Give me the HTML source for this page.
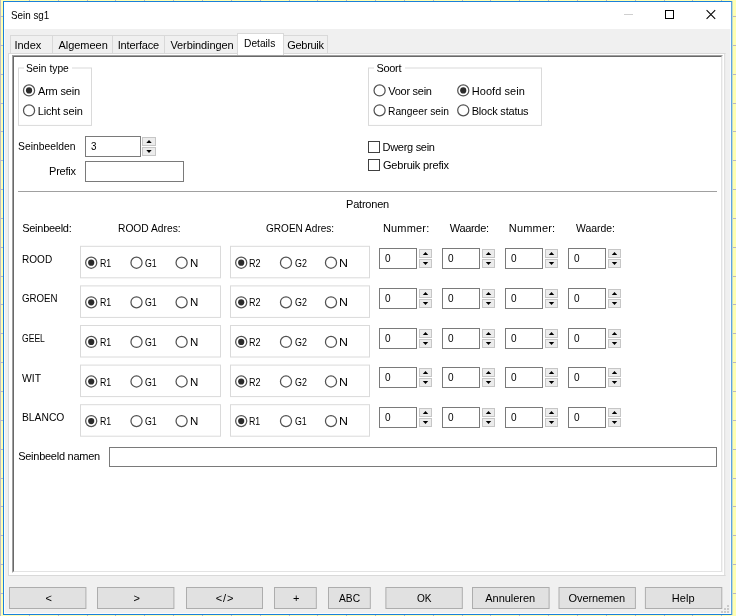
<!DOCTYPE html>
<html><head><meta charset="utf-8"><title>Sein sg1</title>
<style>
*{margin:0;padding:0;box-sizing:border-box}
html,body{width:736px;height:616px;overflow:hidden}
body{background-color:#ffffb2;font-family:"Liberation Sans",sans-serif;font-size:11px;color:#000;position:relative;
background-image:linear-gradient(#bcbcc8,#bcbcc8),repeating-linear-gradient(to bottom,#b8b8c6 0,#b8b8c6 1px,transparent 1px,transparent 28.85px),repeating-linear-gradient(to right,#b8b8c6 0,#b8b8c6 1px,transparent 1px,transparent 28.85px);
background-size:1px 100%,100% 100%,100% 100%;background-position:0 0,0 16px,0 0;background-repeat:no-repeat,no-repeat,no-repeat}
.abs{position:absolute}
.t{position:absolute;white-space:pre;line-height:13px;height:13px}
#win{position:absolute;left:3px;top:1px;width:729px;height:614px;border:1px solid #1a80d9;border-right-color:#5fa4e3;background:#f0f0f0}
#edge{position:absolute;left:732px;top:1px;width:1px;height:614px;background:#c4dcc8}
#inner{position:absolute;left:0;top:0;width:727px;height:612px;border:1px solid #fbfbfb;border-top:none}
#title{position:absolute;left:0;top:0;width:727px;height:27px;background:#fff}
.tab{position:absolute;border:1px solid #d9d9d9;border-bottom:none;background:#f0f0f0}
.tab.sel{background:#fff}
.grp{position:absolute;border:1px solid #dcdcdc}
.chk{position:absolute;border:1px solid #404040;background:#fff}
.inp{position:absolute;border:1px solid #7a7a7a;background:#fff}
.sb{position:absolute;border:1px solid #c6c6c6;background:#ececec}
.btn{position:absolute;border:1px solid #adadad;background:#e1e1e1}
svg{position:absolute;overflow:visible}
#txt{position:absolute;left:0;top:0;width:727px;height:612px;filter:grayscale(1)}
</style></head>
<body>
<div id="edge"></div>
<div id="win">
<div id="inner"></div>
<div id="title"></div>
<svg style="left:0;top:0" width="1" height="1"><path d="M620 12.5h9" stroke="#cfcfcf" stroke-width="1" fill="none"/><rect x="661.5" y="8.5" width="8" height="8" stroke="#000" stroke-width="1" fill="none"/><path d="M702.6 8.2l8.6 8.6M711.2 8.2l-8.6 8.6" stroke="#000" stroke-width="1.05" fill="none"/></svg>
<div class="abs" style="left:4px;top:51px;width:718px;height:523px;border:1px solid #d9d9d9;border-right-color:#ececec;background:#fff"></div>
<div class="abs" style="left:720px;top:52px;width:1px;height:521px;background:#e0e0e0"></div>
<div class="abs" style="left:8px;top:53px;width:711px;height:518px;border-top:1px solid #a0a0a0;border-left:1px solid #a0a0a0;border-right:1px solid #f3f3f3;border-bottom:1px solid #fff;background:#fff"></div>
<div class="abs" style="left:9px;top:54px;width:709px;height:516px;border-top:1px solid #696969;border-left:1px solid #696969;border-right:1px solid #e3e3e3;border-bottom:1px solid #e3e3e3;background:#fff"></div>
<div class="tab" style="left:6px;top:33px;width:43px;height:18px;"></div>
<div class="tab" style="left:48px;top:33px;width:61px;height:18px;"></div>
<div class="tab" style="left:108px;top:33px;width:53px;height:18px;"></div>
<div class="tab" style="left:160px;top:33px;width:75px;height:18px;"></div>
<div class="tab" style="left:279px;top:33px;width:45px;height:18px;"></div>
<div class="tab sel" style="left:233px;top:31px;width:47px;height:22px;"></div>
<svg style="left:0;top:0" width="1" height="1"><rect x="14.5" y="66.00" width="73" height="57.40" fill="none" stroke="#dadada" stroke-width="1"/></svg>
<div class="abs" style="left:20px;top:65px;width:48px;height:2px;background:#fff"></div>
<svg style="left:0;top:0" width="1" height="1"><circle cx="25.05" cy="88.40" r="5.55" fill="#fff" stroke="#525252" stroke-width="1.25"/><circle cx="25.05" cy="88.40" r="3.1" fill="#2b2b2b"/></svg>
<svg style="left:0;top:0" width="1" height="1"><circle cx="25.05" cy="108.40" r="5.55" fill="#fff" stroke="#525252" stroke-width="1.25"/></svg>
<svg style="left:0;top:0" width="1" height="1"><rect x="364.5" y="66.00" width="173" height="57.40" fill="none" stroke="#dadada" stroke-width="1"/></svg>
<div class="abs" style="left:370px;top:65px;width:31px;height:2px;background:#fff"></div>
<svg style="left:0;top:0" width="1" height="1"><circle cx="375.60" cy="88.40" r="5.55" fill="#fff" stroke="#525252" stroke-width="1.25"/></svg>
<svg style="left:0;top:0" width="1" height="1"><circle cx="459.25" cy="88.40" r="5.55" fill="#fff" stroke="#525252" stroke-width="1.25"/><circle cx="459.25" cy="88.40" r="3.1" fill="#2b2b2b"/></svg>
<svg style="left:0;top:0" width="1" height="1"><circle cx="375.60" cy="108.30" r="5.55" fill="#fff" stroke="#525252" stroke-width="1.25"/></svg>
<svg style="left:0;top:0" width="1" height="1"><circle cx="459.25" cy="108.30" r="5.55" fill="#fff" stroke="#525252" stroke-width="1.25"/></svg>
<div class="inp" style="left:81px;top:134px;width:56px;height:21px;"></div>
<div class="sb" style="left:138px;top:135px;width:14px;height:9px;"></div>
<div class="sb" style="left:138px;top:145px;width:14px;height:9px;"></div>
<svg style="left:0;top:0" width="1" height="1"><path d="M142.30 141.00L145.00 138.00L147.70 141.00Z" fill="#000"/><path d="M142.30 148.10L145.00 151.10L147.70 148.10Z" fill="#000"/></svg>
<div class="inp" style="left:81px;top:159px;width:99px;height:21px;"></div>
<div class="chk" style="left:364px;top:139px;width:12px;height:12px;"></div>
<div class="chk" style="left:364px;top:157px;width:12px;height:12px;"></div>
<div class="abs" style="left:14px;top:189px;width:699px;height:1px;background:#a0a0a0"></div>
<svg style="left:0;top:0" width="1" height="1"><rect x="76.5" y="244.30" width="140" height="31.50" fill="none" stroke="#dadada" stroke-width="1"/></svg>
<svg style="left:0;top:0" width="1" height="1"><rect x="226.5" y="244.30" width="139" height="31.50" fill="none" stroke="#dadada" stroke-width="1"/></svg>
<svg style="left:0;top:0" width="1" height="1"><circle cx="87.20" cy="260.70" r="5.55" fill="#fff" stroke="#525252" stroke-width="1.25"/><circle cx="87.20" cy="260.70" r="3.1" fill="#2b2b2b"/></svg>
<svg style="left:0;top:0" width="1" height="1"><circle cx="132.50" cy="260.70" r="5.55" fill="#fff" stroke="#525252" stroke-width="1.25"/></svg>
<svg style="left:0;top:0" width="1" height="1"><circle cx="177.60" cy="260.70" r="5.55" fill="#fff" stroke="#525252" stroke-width="1.25"/></svg>
<svg style="left:0;top:0" width="1" height="1"><circle cx="237.20" cy="260.70" r="5.55" fill="#fff" stroke="#525252" stroke-width="1.25"/><circle cx="237.20" cy="260.70" r="3.1" fill="#2b2b2b"/></svg>
<svg style="left:0;top:0" width="1" height="1"><circle cx="282.00" cy="260.70" r="5.55" fill="#fff" stroke="#525252" stroke-width="1.25"/></svg>
<svg style="left:0;top:0" width="1" height="1"><circle cx="327.00" cy="260.70" r="5.55" fill="#fff" stroke="#525252" stroke-width="1.25"/></svg>
<div class="inp" style="left:375px;top:246px;width:38px;height:21px;"></div>
<div class="sb" style="left:415px;top:247px;width:13px;height:9px;"></div>
<div class="sb" style="left:415px;top:257px;width:13px;height:9px;"></div>
<svg style="left:0;top:0" width="1" height="1"><path d="M418.80 253.00L421.50 250.00L424.20 253.00Z" fill="#000"/><path d="M418.80 260.10L421.50 263.10L424.20 260.10Z" fill="#000"/></svg>
<div class="inp" style="left:438px;top:246px;width:38px;height:21px;"></div>
<div class="sb" style="left:478px;top:247px;width:13px;height:9px;"></div>
<div class="sb" style="left:478px;top:257px;width:13px;height:9px;"></div>
<svg style="left:0;top:0" width="1" height="1"><path d="M481.80 253.00L484.50 250.00L487.20 253.00Z" fill="#000"/><path d="M481.80 260.10L484.50 263.10L487.20 260.10Z" fill="#000"/></svg>
<div class="inp" style="left:501px;top:246px;width:38px;height:21px;"></div>
<div class="sb" style="left:541px;top:247px;width:13px;height:9px;"></div>
<div class="sb" style="left:541px;top:257px;width:13px;height:9px;"></div>
<svg style="left:0;top:0" width="1" height="1"><path d="M544.80 253.00L547.50 250.00L550.20 253.00Z" fill="#000"/><path d="M544.80 260.10L547.50 263.10L550.20 260.10Z" fill="#000"/></svg>
<div class="inp" style="left:564px;top:246px;width:38px;height:21px;"></div>
<div class="sb" style="left:604px;top:247px;width:13px;height:9px;"></div>
<div class="sb" style="left:604px;top:257px;width:13px;height:9px;"></div>
<svg style="left:0;top:0" width="1" height="1"><path d="M607.80 253.00L610.50 250.00L613.20 253.00Z" fill="#000"/><path d="M607.80 260.10L610.50 263.10L613.20 260.10Z" fill="#000"/></svg>
<svg style="left:0;top:0" width="1" height="1"><rect x="76.5" y="283.90" width="140" height="31.50" fill="none" stroke="#dadada" stroke-width="1"/></svg>
<svg style="left:0;top:0" width="1" height="1"><rect x="226.5" y="283.90" width="139" height="31.50" fill="none" stroke="#dadada" stroke-width="1"/></svg>
<svg style="left:0;top:0" width="1" height="1"><circle cx="87.20" cy="300.30" r="5.55" fill="#fff" stroke="#525252" stroke-width="1.25"/><circle cx="87.20" cy="300.30" r="3.1" fill="#2b2b2b"/></svg>
<svg style="left:0;top:0" width="1" height="1"><circle cx="132.50" cy="300.30" r="5.55" fill="#fff" stroke="#525252" stroke-width="1.25"/></svg>
<svg style="left:0;top:0" width="1" height="1"><circle cx="177.60" cy="300.30" r="5.55" fill="#fff" stroke="#525252" stroke-width="1.25"/></svg>
<svg style="left:0;top:0" width="1" height="1"><circle cx="237.20" cy="300.30" r="5.55" fill="#fff" stroke="#525252" stroke-width="1.25"/><circle cx="237.20" cy="300.30" r="3.1" fill="#2b2b2b"/></svg>
<svg style="left:0;top:0" width="1" height="1"><circle cx="282.00" cy="300.30" r="5.55" fill="#fff" stroke="#525252" stroke-width="1.25"/></svg>
<svg style="left:0;top:0" width="1" height="1"><circle cx="327.00" cy="300.30" r="5.55" fill="#fff" stroke="#525252" stroke-width="1.25"/></svg>
<div class="inp" style="left:375px;top:286px;width:38px;height:21px;"></div>
<div class="sb" style="left:415px;top:287px;width:13px;height:9px;"></div>
<div class="sb" style="left:415px;top:297px;width:13px;height:9px;"></div>
<svg style="left:0;top:0" width="1" height="1"><path d="M418.80 293.00L421.50 290.00L424.20 293.00Z" fill="#000"/><path d="M418.80 300.10L421.50 303.10L424.20 300.10Z" fill="#000"/></svg>
<div class="inp" style="left:438px;top:286px;width:38px;height:21px;"></div>
<div class="sb" style="left:478px;top:287px;width:13px;height:9px;"></div>
<div class="sb" style="left:478px;top:297px;width:13px;height:9px;"></div>
<svg style="left:0;top:0" width="1" height="1"><path d="M481.80 293.00L484.50 290.00L487.20 293.00Z" fill="#000"/><path d="M481.80 300.10L484.50 303.10L487.20 300.10Z" fill="#000"/></svg>
<div class="inp" style="left:501px;top:286px;width:38px;height:21px;"></div>
<div class="sb" style="left:541px;top:287px;width:13px;height:9px;"></div>
<div class="sb" style="left:541px;top:297px;width:13px;height:9px;"></div>
<svg style="left:0;top:0" width="1" height="1"><path d="M544.80 293.00L547.50 290.00L550.20 293.00Z" fill="#000"/><path d="M544.80 300.10L547.50 303.10L550.20 300.10Z" fill="#000"/></svg>
<div class="inp" style="left:564px;top:286px;width:38px;height:21px;"></div>
<div class="sb" style="left:604px;top:287px;width:13px;height:9px;"></div>
<div class="sb" style="left:604px;top:297px;width:13px;height:9px;"></div>
<svg style="left:0;top:0" width="1" height="1"><path d="M607.80 293.00L610.50 290.00L613.20 293.00Z" fill="#000"/><path d="M607.80 300.10L610.50 303.10L613.20 300.10Z" fill="#000"/></svg>
<svg style="left:0;top:0" width="1" height="1"><rect x="76.5" y="323.50" width="140" height="31.50" fill="none" stroke="#dadada" stroke-width="1"/></svg>
<svg style="left:0;top:0" width="1" height="1"><rect x="226.5" y="323.50" width="139" height="31.50" fill="none" stroke="#dadada" stroke-width="1"/></svg>
<svg style="left:0;top:0" width="1" height="1"><circle cx="87.20" cy="339.90" r="5.55" fill="#fff" stroke="#525252" stroke-width="1.25"/><circle cx="87.20" cy="339.90" r="3.1" fill="#2b2b2b"/></svg>
<svg style="left:0;top:0" width="1" height="1"><circle cx="132.50" cy="339.90" r="5.55" fill="#fff" stroke="#525252" stroke-width="1.25"/></svg>
<svg style="left:0;top:0" width="1" height="1"><circle cx="177.60" cy="339.90" r="5.55" fill="#fff" stroke="#525252" stroke-width="1.25"/></svg>
<svg style="left:0;top:0" width="1" height="1"><circle cx="237.20" cy="339.90" r="5.55" fill="#fff" stroke="#525252" stroke-width="1.25"/><circle cx="237.20" cy="339.90" r="3.1" fill="#2b2b2b"/></svg>
<svg style="left:0;top:0" width="1" height="1"><circle cx="282.00" cy="339.90" r="5.55" fill="#fff" stroke="#525252" stroke-width="1.25"/></svg>
<svg style="left:0;top:0" width="1" height="1"><circle cx="327.00" cy="339.90" r="5.55" fill="#fff" stroke="#525252" stroke-width="1.25"/></svg>
<div class="inp" style="left:375px;top:326px;width:38px;height:21px;"></div>
<div class="sb" style="left:415px;top:327px;width:13px;height:9px;"></div>
<div class="sb" style="left:415px;top:337px;width:13px;height:9px;"></div>
<svg style="left:0;top:0" width="1" height="1"><path d="M418.80 333.00L421.50 330.00L424.20 333.00Z" fill="#000"/><path d="M418.80 340.10L421.50 343.10L424.20 340.10Z" fill="#000"/></svg>
<div class="inp" style="left:438px;top:326px;width:38px;height:21px;"></div>
<div class="sb" style="left:478px;top:327px;width:13px;height:9px;"></div>
<div class="sb" style="left:478px;top:337px;width:13px;height:9px;"></div>
<svg style="left:0;top:0" width="1" height="1"><path d="M481.80 333.00L484.50 330.00L487.20 333.00Z" fill="#000"/><path d="M481.80 340.10L484.50 343.10L487.20 340.10Z" fill="#000"/></svg>
<div class="inp" style="left:501px;top:326px;width:38px;height:21px;"></div>
<div class="sb" style="left:541px;top:327px;width:13px;height:9px;"></div>
<div class="sb" style="left:541px;top:337px;width:13px;height:9px;"></div>
<svg style="left:0;top:0" width="1" height="1"><path d="M544.80 333.00L547.50 330.00L550.20 333.00Z" fill="#000"/><path d="M544.80 340.10L547.50 343.10L550.20 340.10Z" fill="#000"/></svg>
<div class="inp" style="left:564px;top:326px;width:38px;height:21px;"></div>
<div class="sb" style="left:604px;top:327px;width:13px;height:9px;"></div>
<div class="sb" style="left:604px;top:337px;width:13px;height:9px;"></div>
<svg style="left:0;top:0" width="1" height="1"><path d="M607.80 333.00L610.50 330.00L613.20 333.00Z" fill="#000"/><path d="M607.80 340.10L610.50 343.10L613.20 340.10Z" fill="#000"/></svg>
<svg style="left:0;top:0" width="1" height="1"><rect x="76.5" y="363.10" width="140" height="31.50" fill="none" stroke="#dadada" stroke-width="1"/></svg>
<svg style="left:0;top:0" width="1" height="1"><rect x="226.5" y="363.10" width="139" height="31.50" fill="none" stroke="#dadada" stroke-width="1"/></svg>
<svg style="left:0;top:0" width="1" height="1"><circle cx="87.20" cy="379.50" r="5.55" fill="#fff" stroke="#525252" stroke-width="1.25"/><circle cx="87.20" cy="379.50" r="3.1" fill="#2b2b2b"/></svg>
<svg style="left:0;top:0" width="1" height="1"><circle cx="132.50" cy="379.50" r="5.55" fill="#fff" stroke="#525252" stroke-width="1.25"/></svg>
<svg style="left:0;top:0" width="1" height="1"><circle cx="177.60" cy="379.50" r="5.55" fill="#fff" stroke="#525252" stroke-width="1.25"/></svg>
<svg style="left:0;top:0" width="1" height="1"><circle cx="237.20" cy="379.50" r="5.55" fill="#fff" stroke="#525252" stroke-width="1.25"/><circle cx="237.20" cy="379.50" r="3.1" fill="#2b2b2b"/></svg>
<svg style="left:0;top:0" width="1" height="1"><circle cx="282.00" cy="379.50" r="5.55" fill="#fff" stroke="#525252" stroke-width="1.25"/></svg>
<svg style="left:0;top:0" width="1" height="1"><circle cx="327.00" cy="379.50" r="5.55" fill="#fff" stroke="#525252" stroke-width="1.25"/></svg>
<div class="inp" style="left:375px;top:365px;width:38px;height:21px;"></div>
<div class="sb" style="left:415px;top:366px;width:13px;height:9px;"></div>
<div class="sb" style="left:415px;top:376px;width:13px;height:9px;"></div>
<svg style="left:0;top:0" width="1" height="1"><path d="M418.80 372.00L421.50 369.00L424.20 372.00Z" fill="#000"/><path d="M418.80 379.10L421.50 382.10L424.20 379.10Z" fill="#000"/></svg>
<div class="inp" style="left:438px;top:365px;width:38px;height:21px;"></div>
<div class="sb" style="left:478px;top:366px;width:13px;height:9px;"></div>
<div class="sb" style="left:478px;top:376px;width:13px;height:9px;"></div>
<svg style="left:0;top:0" width="1" height="1"><path d="M481.80 372.00L484.50 369.00L487.20 372.00Z" fill="#000"/><path d="M481.80 379.10L484.50 382.10L487.20 379.10Z" fill="#000"/></svg>
<div class="inp" style="left:501px;top:365px;width:38px;height:21px;"></div>
<div class="sb" style="left:541px;top:366px;width:13px;height:9px;"></div>
<div class="sb" style="left:541px;top:376px;width:13px;height:9px;"></div>
<svg style="left:0;top:0" width="1" height="1"><path d="M544.80 372.00L547.50 369.00L550.20 372.00Z" fill="#000"/><path d="M544.80 379.10L547.50 382.10L550.20 379.10Z" fill="#000"/></svg>
<div class="inp" style="left:564px;top:365px;width:38px;height:21px;"></div>
<div class="sb" style="left:604px;top:366px;width:13px;height:9px;"></div>
<div class="sb" style="left:604px;top:376px;width:13px;height:9px;"></div>
<svg style="left:0;top:0" width="1" height="1"><path d="M607.80 372.00L610.50 369.00L613.20 372.00Z" fill="#000"/><path d="M607.80 379.10L610.50 382.10L613.20 379.10Z" fill="#000"/></svg>
<svg style="left:0;top:0" width="1" height="1"><rect x="76.5" y="402.70" width="140" height="31.50" fill="none" stroke="#dadada" stroke-width="1"/></svg>
<svg style="left:0;top:0" width="1" height="1"><rect x="226.5" y="402.70" width="139" height="31.50" fill="none" stroke="#dadada" stroke-width="1"/></svg>
<svg style="left:0;top:0" width="1" height="1"><circle cx="87.20" cy="419.10" r="5.55" fill="#fff" stroke="#525252" stroke-width="1.25"/><circle cx="87.20" cy="419.10" r="3.1" fill="#2b2b2b"/></svg>
<svg style="left:0;top:0" width="1" height="1"><circle cx="132.50" cy="419.10" r="5.55" fill="#fff" stroke="#525252" stroke-width="1.25"/></svg>
<svg style="left:0;top:0" width="1" height="1"><circle cx="177.60" cy="419.10" r="5.55" fill="#fff" stroke="#525252" stroke-width="1.25"/></svg>
<svg style="left:0;top:0" width="1" height="1"><circle cx="237.20" cy="419.10" r="5.55" fill="#fff" stroke="#525252" stroke-width="1.25"/><circle cx="237.20" cy="419.10" r="3.1" fill="#2b2b2b"/></svg>
<svg style="left:0;top:0" width="1" height="1"><circle cx="282.00" cy="419.10" r="5.55" fill="#fff" stroke="#525252" stroke-width="1.25"/></svg>
<svg style="left:0;top:0" width="1" height="1"><circle cx="327.00" cy="419.10" r="5.55" fill="#fff" stroke="#525252" stroke-width="1.25"/></svg>
<div class="inp" style="left:375px;top:405px;width:38px;height:21px;"></div>
<div class="sb" style="left:415px;top:406px;width:13px;height:9px;"></div>
<div class="sb" style="left:415px;top:416px;width:13px;height:9px;"></div>
<svg style="left:0;top:0" width="1" height="1"><path d="M418.80 412.00L421.50 409.00L424.20 412.00Z" fill="#000"/><path d="M418.80 419.10L421.50 422.10L424.20 419.10Z" fill="#000"/></svg>
<div class="inp" style="left:438px;top:405px;width:38px;height:21px;"></div>
<div class="sb" style="left:478px;top:406px;width:13px;height:9px;"></div>
<div class="sb" style="left:478px;top:416px;width:13px;height:9px;"></div>
<svg style="left:0;top:0" width="1" height="1"><path d="M481.80 412.00L484.50 409.00L487.20 412.00Z" fill="#000"/><path d="M481.80 419.10L484.50 422.10L487.20 419.10Z" fill="#000"/></svg>
<div class="inp" style="left:501px;top:405px;width:38px;height:21px;"></div>
<div class="sb" style="left:541px;top:406px;width:13px;height:9px;"></div>
<div class="sb" style="left:541px;top:416px;width:13px;height:9px;"></div>
<svg style="left:0;top:0" width="1" height="1"><path d="M544.80 412.00L547.50 409.00L550.20 412.00Z" fill="#000"/><path d="M544.80 419.10L547.50 422.10L550.20 419.10Z" fill="#000"/></svg>
<div class="inp" style="left:564px;top:405px;width:38px;height:21px;"></div>
<div class="sb" style="left:604px;top:406px;width:13px;height:9px;"></div>
<div class="sb" style="left:604px;top:416px;width:13px;height:9px;"></div>
<svg style="left:0;top:0" width="1" height="1"><path d="M607.80 412.00L610.50 409.00L613.20 412.00Z" fill="#000"/><path d="M607.80 419.10L610.50 422.10L613.20 419.10Z" fill="#000"/></svg>
<div class="inp" style="left:105px;top:445px;width:608px;height:20px;"></div>
<svg style="left:0;top:0" width="1" height="1"><rect x="5.50" y="585.5" width="76.40" height="21" fill="#e1e1e1" stroke="#adadad" stroke-width="1"/><rect x="93.50" y="585.5" width="76.40" height="21" fill="#e1e1e1" stroke="#adadad" stroke-width="1"/><rect x="182.50" y="585.5" width="76.00" height="21" fill="#e1e1e1" stroke="#adadad" stroke-width="1"/><rect x="270.50" y="585.5" width="41.80" height="21" fill="#e1e1e1" stroke="#adadad" stroke-width="1"/><rect x="324.50" y="585.5" width="41.80" height="21" fill="#e1e1e1" stroke="#adadad" stroke-width="1"/><rect x="381.90" y="585.5" width="76.40" height="21" fill="#e1e1e1" stroke="#adadad" stroke-width="1"/><rect x="468.50" y="585.5" width="76.60" height="21" fill="#e1e1e1" stroke="#adadad" stroke-width="1"/><rect x="555.00" y="585.5" width="76.40" height="21" fill="#e1e1e1" stroke="#adadad" stroke-width="1"/><rect x="641.40" y="585.5" width="76.40" height="21" fill="#e1e1e1" stroke="#adadad" stroke-width="1"/></svg>
<div class="abs" style="left:723px;top:603px;width:2px;height:2px;background:#cacaca"></div>
<div class="abs" style="left:720px;top:606px;width:2px;height:2px;background:#cacaca"></div>
<div class="abs" style="left:723px;top:606px;width:2px;height:2px;background:#cacaca"></div>
<div class="abs" style="left:717px;top:609px;width:2px;height:2px;background:#cacaca"></div>
<div class="abs" style="left:720px;top:609px;width:2px;height:2px;background:#cacaca"></div>
<div class="abs" style="left:723px;top:609px;width:2px;height:2px;background:#cacaca"></div>
<div id="txt">
<div class="t" style="left:6.80px;top:7px;transform:scaleX(0.8946);transform-origin:0 0;">Sein sg1</div>
<div class="t" style="left:10.40px;top:37px;letter-spacing:-0.012px;">Index</div>
<div class="t" style="left:54.50px;top:37px;letter-spacing:-0.036px;">Algemeen</div>
<div class="t" style="left:113.70px;top:37px;letter-spacing:-0.159px;">Interface</div>
<div class="t" style="left:166.38px;top:37px;letter-spacing:-0.080px;">Verbindingen</div>
<div class="t" style="left:283.20px;top:37px;letter-spacing:-0.283px;">Gebruik</div>
<div class="t" style="left:239.99px;top:35px;transform:scaleX(0.9297);transform-origin:0 0;">Details</div>
<div class="t" style="left:22.43px;top:60px;transform:scaleX(0.9337);transform-origin:0 0;">Sein type</div>
<div class="t" style="left:34.00px;top:83px;letter-spacing:-0.189px;">Arm sein</div>
<div class="t" style="left:33.73px;top:103px;letter-spacing:-0.153px;">Licht sein</div>
<div class="t" style="left:372.40px;top:60px;letter-spacing:-0.312px;">Soort</div>
<div class="t" style="left:384.27px;top:83px;letter-spacing:-0.275px;">Voor sein</div>
<div class="t" style="left:467.73px;top:83px;letter-spacing:0.067px;">Hoofd sein</div>
<div class="t" style="left:383.88px;top:103px;transform:scaleX(0.9331);transform-origin:0 0;">Rangeer sein</div>
<div class="t" style="left:467.73px;top:103px;letter-spacing:-0.218px;">Block status</div>
<div class="t" style="left:14.23px;top:138px;transform:scaleX(0.9400);transform-origin:0 0;">Seinbeelden</div>
<div class="t" style="left:86.65px;top:138px;transform:scaleX(0.8976);transform-origin:0 0;">3</div>
<div class="t" style="left:45.02px;top:163px;letter-spacing:-0.225px;">Prefix</div>
<div class="t" style="left:378.52px;top:139px;letter-spacing:-0.286px;">Dwerg sein</div>
<div class="t" style="left:378.90px;top:157px;letter-spacing:-0.173px;">Gebruik prefix</div>
<div class="t" style="left:342.02px;top:196px;letter-spacing:-0.214px;">Patronen</div>
<div class="t" style="left:18.20px;top:220px;letter-spacing:-0.267px;">Seinbeeld:</div>
<div class="t" style="left:114.38px;top:220px;transform:scaleX(0.9315);transform-origin:0 0;">ROOD Adres:</div>
<div class="t" style="left:261.64px;top:220px;transform:scaleX(0.9135);transform-origin:0 0;">GROEN Adres:</div>
<div class="t" style="left:378.93px;top:220px;letter-spacing:0.188px;">Nummer:</div>
<div class="t" style="left:445.77px;top:220px;letter-spacing:-0.317px;">Waarde:</div>
<div class="t" style="left:504.82px;top:220px;letter-spacing:0.188px;">Nummer:</div>
<div class="t" style="left:571.98px;top:220px;transform:scaleX(0.9475);transform-origin:0 0;">Waarde:</div>
<div class="t" style="left:17.90px;top:251px;transform:scaleX(0.9138);transform-origin:0 0;">ROOD</div>
<div class="t" style="left:95.90px;top:255px;transform:scaleX(0.8000);transform-origin:0 0;">R1</div>
<div class="t" style="left:141.30px;top:255px;transform:scaleX(0.8000);transform-origin:0 0;">G1</div>
<div class="t" style="left:186.19px;top:255px;transform:scaleX(1.0449);transform-origin:0 0;">N</div>
<div class="t" style="left:245.18px;top:255px;transform:scaleX(0.8238);transform-origin:0 0;">R2</div>
<div class="t" style="left:290.60px;top:255px;transform:scaleX(0.8073);transform-origin:0 0;">G2</div>
<div class="t" style="left:335.01px;top:255px;transform:scaleX(1.1265);transform-origin:0 0;">N</div>
<div class="t" style="left:380.86px;top:250px;transform:scaleX(0.9143);transform-origin:0 0;">0</div>
<div class="t" style="left:443.86px;top:250px;transform:scaleX(0.9143);transform-origin:0 0;">0</div>
<div class="t" style="left:506.86px;top:250px;transform:scaleX(0.9143);transform-origin:0 0;">0</div>
<div class="t" style="left:569.86px;top:250px;transform:scaleX(0.9143);transform-origin:0 0;">0</div>
<div class="t" style="left:18.26px;top:290px;transform:scaleX(0.8821);transform-origin:0 0;">GROEN</div>
<div class="t" style="left:95.90px;top:294px;transform:scaleX(0.8000);transform-origin:0 0;">R1</div>
<div class="t" style="left:141.30px;top:294px;transform:scaleX(0.8000);transform-origin:0 0;">G1</div>
<div class="t" style="left:186.19px;top:294px;transform:scaleX(1.0449);transform-origin:0 0;">N</div>
<div class="t" style="left:245.18px;top:294px;transform:scaleX(0.8238);transform-origin:0 0;">R2</div>
<div class="t" style="left:290.60px;top:294px;transform:scaleX(0.8073);transform-origin:0 0;">G2</div>
<div class="t" style="left:335.01px;top:294px;transform:scaleX(1.1265);transform-origin:0 0;">N</div>
<div class="t" style="left:380.86px;top:290px;transform:scaleX(0.9143);transform-origin:0 0;">0</div>
<div class="t" style="left:443.86px;top:290px;transform:scaleX(0.9143);transform-origin:0 0;">0</div>
<div class="t" style="left:506.86px;top:290px;transform:scaleX(0.9143);transform-origin:0 0;">0</div>
<div class="t" style="left:569.86px;top:290px;transform:scaleX(0.9143);transform-origin:0 0;">0</div>
<div class="t" style="left:18.31px;top:330px;transform:scaleX(0.7789);transform-origin:0 0;">GEEL</div>
<div class="t" style="left:95.90px;top:334px;transform:scaleX(0.8000);transform-origin:0 0;">R1</div>
<div class="t" style="left:141.30px;top:334px;transform:scaleX(0.8000);transform-origin:0 0;">G1</div>
<div class="t" style="left:186.19px;top:334px;transform:scaleX(1.0449);transform-origin:0 0;">N</div>
<div class="t" style="left:245.18px;top:334px;transform:scaleX(0.8238);transform-origin:0 0;">R2</div>
<div class="t" style="left:290.60px;top:334px;transform:scaleX(0.8073);transform-origin:0 0;">G2</div>
<div class="t" style="left:335.01px;top:334px;transform:scaleX(1.1265);transform-origin:0 0;">N</div>
<div class="t" style="left:380.86px;top:330px;transform:scaleX(0.9143);transform-origin:0 0;">0</div>
<div class="t" style="left:443.86px;top:330px;transform:scaleX(0.9143);transform-origin:0 0;">0</div>
<div class="t" style="left:506.86px;top:330px;transform:scaleX(0.9143);transform-origin:0 0;">0</div>
<div class="t" style="left:569.86px;top:330px;transform:scaleX(0.9143);transform-origin:0 0;">0</div>
<div class="t" style="left:17.98px;top:370px;transform:scaleX(0.9443);transform-origin:0 0;">WIT</div>
<div class="t" style="left:95.90px;top:374px;transform:scaleX(0.8000);transform-origin:0 0;">R1</div>
<div class="t" style="left:141.30px;top:374px;transform:scaleX(0.8000);transform-origin:0 0;">G1</div>
<div class="t" style="left:186.19px;top:374px;transform:scaleX(1.0449);transform-origin:0 0;">N</div>
<div class="t" style="left:245.18px;top:374px;transform:scaleX(0.8238);transform-origin:0 0;">R2</div>
<div class="t" style="left:290.60px;top:374px;transform:scaleX(0.8073);transform-origin:0 0;">G2</div>
<div class="t" style="left:335.01px;top:374px;transform:scaleX(1.1265);transform-origin:0 0;">N</div>
<div class="t" style="left:380.86px;top:369px;transform:scaleX(0.9143);transform-origin:0 0;">0</div>
<div class="t" style="left:443.86px;top:369px;transform:scaleX(0.9143);transform-origin:0 0;">0</div>
<div class="t" style="left:506.86px;top:369px;transform:scaleX(0.9143);transform-origin:0 0;">0</div>
<div class="t" style="left:569.86px;top:369px;transform:scaleX(0.9143);transform-origin:0 0;">0</div>
<div class="t" style="left:17.88px;top:409px;transform:scaleX(0.9368);transform-origin:0 0;">BLANCO</div>
<div class="t" style="left:95.90px;top:413px;transform:scaleX(0.8000);transform-origin:0 0;">R1</div>
<div class="t" style="left:141.30px;top:413px;transform:scaleX(0.8000);transform-origin:0 0;">G1</div>
<div class="t" style="left:186.19px;top:413px;transform:scaleX(1.0449);transform-origin:0 0;">N</div>
<div class="t" style="left:245.20px;top:413px;transform:scaleX(0.8000);transform-origin:0 0;">R1</div>
<div class="t" style="left:290.60px;top:413px;transform:scaleX(0.8000);transform-origin:0 0;">G1</div>
<div class="t" style="left:335.01px;top:413px;transform:scaleX(1.1265);transform-origin:0 0;">N</div>
<div class="t" style="left:380.86px;top:409px;transform:scaleX(0.9143);transform-origin:0 0;">0</div>
<div class="t" style="left:443.86px;top:409px;transform:scaleX(0.9143);transform-origin:0 0;">0</div>
<div class="t" style="left:506.86px;top:409px;transform:scaleX(0.9143);transform-origin:0 0;">0</div>
<div class="t" style="left:569.86px;top:409px;transform:scaleX(0.9143);transform-origin:0 0;">0</div>
<div class="t" style="left:14.20px;top:448px;letter-spacing:-0.262px;">Seinbeeld namen</div>
<div class="t" style="left:41.40px;top:590px;">&lt;</div>
<div class="t" style="left:129.40px;top:590px;">&gt;</div>
<div class="t" style="left:211.70px;top:590px;letter-spacing:0.863px;">&lt;/&gt;</div>
<div class="t" style="left:288.90px;top:590px;">+</div>
<div class="t" style="left:334.80px;top:590px;transform:scaleX(0.9311);transform-origin:0 0;">ABC</div>
<div class="t" style="left:413.14px;top:590px;transform:scaleX(0.9180);transform-origin:0 0;">OK</div>
<div class="t" style="left:481.30px;top:590px;letter-spacing:-0.034px;">Annuleren</div>
<div class="t" style="left:564.60px;top:590px;letter-spacing:-0.119px;">Overnemen</div>
<div class="t" style="left:667.73px;top:590px;letter-spacing:0.117px;">Help</div>
</div>
</div>
</body></html>
